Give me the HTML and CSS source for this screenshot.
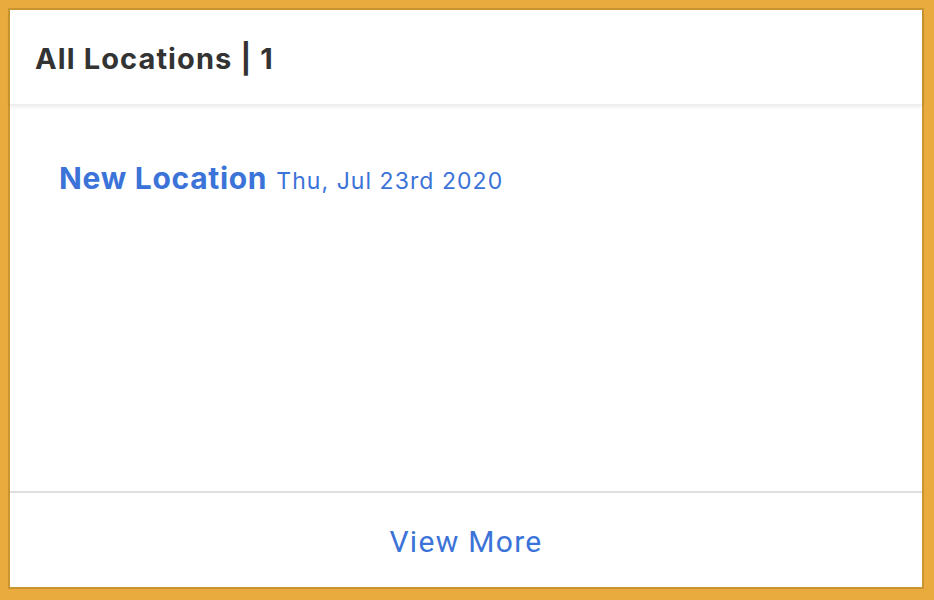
FILE: index.html
```html
<!DOCTYPE html>
<html>
<head>
<meta charset="utf-8">
<link rel="stylesheet" href="styles.css">
</head>
<body>
<div class="card">
  <div class="card-header">
    <h2 class="title">All Locations | 1</h2>
  </div>
  <div class="card-body">
    <div class="item">
      <span class="item-name">New Location</span>
      <span class="item-date">Thu, Jul 23rd 2020</span>
    </div>
  </div>
  <div class="card-footer">
    <a class="view-more" href="#">View More</a>
  </div>
</div>
</body>
</html>
```
FILE: styles.css
```css
html, body {
  margin: 0;
  padding: 0;
  height: 100%;
}
body {
  background: #e9ab3d;
  padding: 8px 10px 11px 8px;
  box-sizing: border-box;
  font-family: Inter, "Noto Sans", sans-serif;
}
.card {
  height: 100%;
  box-sizing: border-box;
  background: #fff;
  border: 2px solid #c9952f;
  display: flex;
  flex-direction: column;
}
.card-header {
  height: 95px;
  display: flex;
  align-items: center;
  padding-left: 25px;
  padding-top: 3px;
  box-sizing: border-box;
  box-shadow: 0 2px 4px rgba(0,0,0,0.08);
  border-bottom: 1px solid #ececec;
  position: relative;
}
.title {
  margin: 0;
  font-size: 29px;
  font-weight: 700;
  color: #333;
  letter-spacing: 1.1px;
}
.card-body {
  flex: 1;
  padding: 55px 49px 0;
}
.item {
  display: flex;
  align-items: baseline;
  gap: 9px;
  color: #3b73d8;
}
.item-name {
  font-size: 30px;
  font-weight: 700;
  letter-spacing: 0.7px;
}
.item-date {
  font-size: 23px;
  font-weight: 400;
  letter-spacing: 1.05px;
}
.card-footer {
  height: 96px;
  border-top: 2px solid #dedede;
  display: flex;
  align-items: center;
  justify-content: center;
  padding-top: 2px;
  box-sizing: border-box;
}
.view-more {
  font-family: Roboto, sans-serif;
  font-size: 30px;
  color: #3b73d8;
  text-decoration: none;
  letter-spacing: 1.3px;
}
```
